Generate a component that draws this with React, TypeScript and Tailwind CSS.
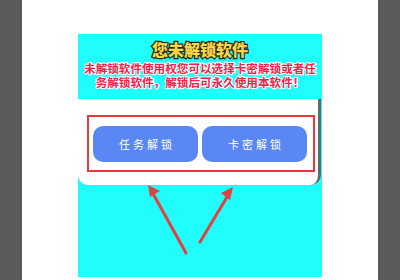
export default function App() {
  return (
    <div className="flex h-[280px] w-[400px] overflow-hidden bg-white font-['Noto_Sans_CJK_SC',sans-serif]">
      <div className="w-[22px] shrink-0 bg-[#5a5a5a]" />
      <div className="flex-1 bg-white px-[56px] pt-[34px]">
        <div className="relative flex h-[243px] flex-col bg-[#1ffdfd]">
          <div className="pt-[5px] text-center">
            <div className="text-[16px] font-black leading-[20px] text-[#f7d648] [-webkit-text-stroke:2.4px_#2a2a1a] [paint-order:stroke_fill]">
              您未解锁软件
            </div>
            <div className="mt-[2px] text-[11.6px] font-bold leading-[14px] text-[#f2214a] [-webkit-text-stroke:2px_#ffffff] [paint-order:stroke_fill]">
              <div>未解锁软件使用权您可以选择卡密解锁或者任</div>
              <div>务解锁软件，解锁后可永久使用本软件！</div>
            </div>
          </div>
          <div className="mt-[10px] mr-[1px] rounded-b-[10px] border-r-[3px] border-[#5d6b6b] bg-white pt-[16px] pb-[13px] pl-[9px] pr-[3px]">
            <div className="flex h-[57px] gap-[4px] border-2 border-[#e5393d] pt-[9px] pb-[8px] pl-[4px] pr-[6px]">
              <button className="flex-1 rounded-[10px] bg-[#5a87f4] pl-[3px] text-[11px] tracking-[3px] text-white">
                任务解锁
              </button>
              <button className="flex-1 rounded-[10px] bg-[#5a87f4] pl-[3px] text-[11px] tracking-[3px] text-white">
                卡密解锁
              </button>
            </div>
          </div>
          <svg className="absolute left-0 top-0" width="244" height="243" viewBox="0 0 244 243">
            <g stroke="#e2423f" strokeWidth="3" strokeLinecap="round" fill="none">
              <line x1="108" y1="219" x2="73" y2="156" />
              <line x1="122" y1="208" x2="152" y2="158" />
            </g>
            <g fill="#e2423f">
              <polygon points="70,151 82,157 72,163" />
              <polygon points="155,153 152,166 143,159" />
            </g>
          </svg>
        </div>
      </div>
      <div className="w-[22px] shrink-0 bg-[#5a5a5a]" />
    </div>
  );
}
